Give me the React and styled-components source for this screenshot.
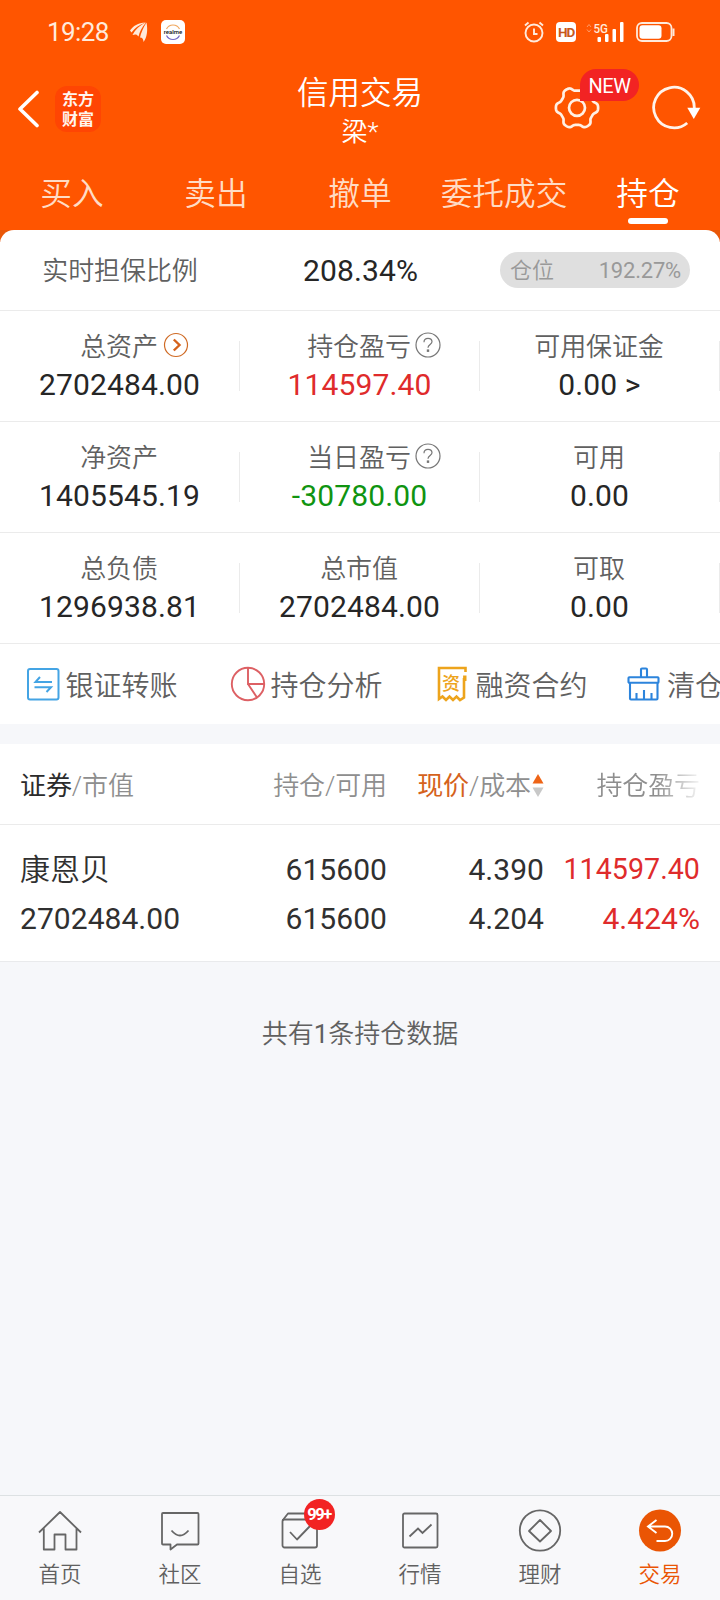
import React from "react";
import styled, { createGlobalStyle } from "styled-components";

const Global = createGlobalStyle`
  * { box-sizing: border-box; }
  body {
    margin: 0;
    background: #f6f7fa;
    font-family: Roboto, "Noto Sans CJK SC", sans-serif;
    color: #2b2b2b;
  }
  svg { display: block; flex: none; }
`;

const Screen = styled.div`
  width: 720px;
  height: 1600px;
  display: flex;
  flex-direction: column;
  overflow: hidden;
  background: #f6f7fa;
`;

const cjkLight = `
  font-family: Roboto, "Noto Sans CJK SC DemiLight", "Noto Sans CJK SC", sans-serif;
  font-weight: 350;
`;

/* ---------- header ---------- */
const Header = styled.header`
  height: 230px;
  background: #ff5500;
  color: #fff;
`;

const StatusBar = styled.div`
  height: 64px;
  display: flex;
  align-items: center;
  padding: 0 45px 0 47px;
`;

const Clock = styled.span`
  width: 83px;
  font-size: 26px;
  line-height: 30px;
  letter-spacing: -0.6px;
  color: #ffeadb;
`;

const StatusLeft = styled.div`
  display: flex;
  align-items: center;
  gap: 13px;
  flex: 1;
`;

const StatusRight = styled.div`
  display: flex;
  align-items: center;
`;

const Gap = styled.span`
  width: ${(p) => p.$w}px;
`;

const HdTag = styled.span`
  width: 20px;
  height: 20px;
  border-radius: 4px;
  background: #fff;
  color: #c8581c;
  font: 700 13.5px/21px Roboto, sans-serif;
  letter-spacing: -1.2px;
  text-align: center;
`;

const NavBar = styled.div`
  height: 96px;
  display: grid;
  grid-template-columns: 200px 1fr 200px;
`;

const NavSide = styled.div`
  display: flex;
  align-items: flex-start;
  padding: ${(p) => p.$pad};
`;

const AppLogo = styled.div`
  width: 46px;
  height: 46px;
  margin-left: 16px;
  border-radius: 12px;
  background: #ff4503;
  padding-top: 3px;
  display: flex;
  flex-direction: column;
  font: 700 16px/18px "Noto Sans CJK SC", sans-serif;
  gap: 1.5px;
  text-align: center;
  color: #fff5ee;
`;

const TitleBlock = styled.div`
  text-align: center;
  padding-top: 10px;
  ${cjkLight}
`;

const Title = styled.div`
  font-size: 31.5px;
  line-height: 40px;
`;

const Subtitle = styled.div`
  font-size: 26px;
  line-height: 36px;
`;

const GearButton = styled.div`
  position: relative;
  width: 46px;
  height: 46px;
`;

const NewBadge = styled.span`
  position: absolute;
  left: 26px;
  top: -16px;
  width: 59px;
  height: 32px;
  border-radius: 16px 16px 16px 0;
  background: #f22323;
  font-size: 20px;
  line-height: 34px;
  text-align: center;
  letter-spacing: -0.5px;
`;

const Tabs = styled.nav`
  height: 70px;
  display: grid;
  grid-template-columns: repeat(5, 144px);
`;

const Tab = styled.div`
  display: flex;
  flex-direction: column;
  align-items: center;
  padding-top: 11px;
  font-size: 31.7px;
  line-height: 47px;
  ${cjkLight}
  color: ${(p) => (p.$active ? "#fff" : "#ffdcc5")};
  &::after {
    content: "";
    width: 40px;
    height: 6px;
    border-radius: 3px;
    background: ${(p) => (p.$active ? "#fff" : "transparent")};
  }
`;

/* ---------- summary ---------- */
const SummaryBack = styled.div`
  background: linear-gradient(#e95708 0 12px, #fff 12px);
`;

const Summary = styled.section`
  background: #fff;
  border-radius: 14px 14px 0 0;
`;

const RatioRow = styled.div`
  height: 81px;
  display: grid;
  grid-template-columns: 240px 240px 240px;
  align-items: center;
  justify-items: center;
  border-bottom: 1px solid #ebebeb;
  padding-top: 2px;
`;

const Label = styled.div`
  position: relative;
  font-size: 26px;
  line-height: 36px;
  color: #606060;
  letter-spacing: -0.1px;
  ${cjkLight}
  white-space: nowrap;
`;

const Value = styled.div`
  font-size: 30px;
  line-height: 36px;
  letter-spacing: 0.12px;
  padding-left: 1px;
  color: ${(p) => p.$color || "#262626"};
  white-space: pre;
`;

const Pill = styled.div`
  width: 190px;
  height: 36px;
  margin: -2px 10px 0 0;
  border-radius: 18px;
  background: #dfdfdf;
  display: flex;
  justify-content: space-between;
  align-items: center;
  padding: 1px 9px 0 10px;
  font-size: 22px;
  line-height: 36px;
  color: #999;
  ${cjkLight}
`;

const PillNumber = styled.span`
  font-weight: 400;
  letter-spacing: -0.2px;
`;

const StatRow = styled.div`
  height: 111px;
  display: grid;
  grid-template-columns: repeat(3, 240px);
  align-items: center;
  border-bottom: 1px solid #ebebeb;
`;

const Stat = styled.div`
  height: 110px;
  padding: 18px 2px 0 0;
  display: flex;
  flex-direction: column;
  align-items: center;
  gap: 2px;
  background: linear-gradient(#ebebeb, #ebebeb) right 30px / 1px 50px no-repeat;
`;

const LabelIcon = styled.span`
  position: absolute;
  left: 100%;
  top: 3px;
  margin-left: ${(p) => p.$gap}px;
`;

const Shortcuts = styled.div`
  height: 80px;
  display: flex;
  padding-left: 24.5px;
  overflow: hidden;
`;

const Shortcut = styled.div`
  flex: none;
  width: ${(p) => p.$w}px;
  display: flex;
  align-items: center;
  gap: 3px;
  font-size: 28px;
  line-height: 40px;
  color: #606060;
  ${cjkLight}
`;

const ShortcutName = styled.span`
  padding-top: 5px;
  white-space: nowrap;
`;

const Ticket = styled.div`
  position: relative;
  width: 38px;
  height: 38px;
`;

const TicketMark = styled.span`
  position: absolute;
  left: 7.5px;
  top: 5px;
  font: 500 18px/24px "Noto Sans CJK SC", sans-serif;
  color: #eda41c;
`;

/* ---------- holdings ---------- */
const Holdings = styled.section`
  margin-top: 20px;
  background: #fff;
`;

const columns = "170px 197px 157px 156px";

const HoldHead = styled.div`
  height: 81px;
  display: grid;
  grid-template-columns: ${columns};
  padding: 24px 0 0 20px;
  border-bottom: 1px solid #ebebeb;
  font-size: 26px;
  line-height: 36px;
  letter-spacing: -0.1px;
  color: #8e8e8e;
  ${cjkLight}
`;

const HeadCell = styled.div`
  display: flex;
  justify-content: ${(p) => (p.$left ? "flex-start" : "flex-end")};
  white-space: nowrap;
  ${(p) => p.$fade && "mask-image: linear-gradient(90deg, #000 0 112px, transparent 160px);"}
`;

const Strong = styled.span`
  font-weight: 400;
  font-family: Roboto, "Noto Sans CJK SC", sans-serif;
  color: ${(p) => p.$color || "#2b2b2b"};
`;

const HoldRow = styled.div`
  height: 137px;
  display: grid;
  grid-template-columns: ${columns};
  padding: 20px 0 0 20px;
  border-bottom: 1px solid #e9eaec;
`;

const HoldCell = styled.div`
  text-align: ${(p) => (p.$left ? "left" : "right")};
  font-size: 30px;
  line-height: 49px;
  letter-spacing: 0.05px;
  white-space: nowrap;
  color: ${(p) => (p.$red ? "#df2b2b" : "#303030")};
`;

const StockName = styled.div`
  ${cjkLight}
`;

const ProfitValue = styled.div`
  font-size: 28.6px;
`;

const Count = styled.div`
  flex: 1;
  padding-top: 54px;
  text-align: center;
  font-size: 26px;
  line-height: 36px;
  color: #606060;
  ${cjkLight}
`;

const CountNumber = styled.span`
  font-weight: 400;
`;

/* ---------- bottom bar ---------- */
const BottomBar = styled.nav`
  height: 105px;
  border-top: 1px solid #dde1e3;
  background: #f8f8fa;
  display: grid;
  grid-template-columns: repeat(6, 120px);
`;

const BottomItem = styled.div`
  display: flex;
  flex-direction: column;
  align-items: center;
  padding-top: 12px;
  font-size: 21.5px;
  line-height: 30px;
  color: ${(p) => (p.$active ? "#ea5504" : "#606060")};
  ${cjkLight}
`;

const IconSlot = styled.div`
  position: relative;
  height: 52px;
`;

const CountBadge = styled.span`
  position: absolute;
  left: 26px;
  top: -9px;
  width: 31px;
  height: 31px;
  border-radius: 50%;
  background: #f22323;
  color: #fff;
  font: 700 16.5px/31px "Roboto", sans-serif;
  letter-spacing: -1.4px;
  text-indent: -1px;
  text-align: center;
`;

/* ---------- icons ---------- */
const gearPath = (() => {
  const pts = [];
  for (let i = 0; i < 180; i++) {
    const t = (i * Math.PI) / 90;
    const r = 19.1 + 2 * Math.tanh(1.7 * Math.cos(6 * t)) / Math.tanh(1.7);
    pts.push(`${(23 + r * Math.cos(t)).toFixed(2)} ${(22.8 + r * Math.sin(t)).toFixed(2)}`);
  }
  return `M${pts.join("L")}Z`;
})();

const Gear = () => (
  <svg width="46" height="46" fill="none" stroke="#fff0e4" strokeWidth="2.7" strokeLinejoin="round">
    <path d={gearPath} />
    <circle cx="23" cy="22.800" r="8" />
  </svg>
);

const Refresh = () => (
  <svg width="54" height="46">
    <path d="M37.200 38A20.300 20.300 0 1 1 44.300 23" fill="none" stroke="#fff3ea" strokeWidth="2.800" />
    <path d="M37.300 22.800h13L43.800 34z" fill="#fff" />
  </svg>
);

const Plane = () => (
  <svg width="18" height="20" fill="#ffeadb">
    <path d="M0 8.500C3 4 8 1 15.500 0.500C9 3 4.500 6 1.500 10.500z" />
    <path d="M2.500 13C5 8 10 3 16 0.500C12 5 9.500 10 8.500 14.500C7 12 5 12 2.500 13z" />
    <path d="M10 15.500C11 11 13 6 16.500 0.500C18 8 17 16 13.500 20C13.500 17.500 12.500 15.500 10 15.500z" />
  </svg>
);

const BrandTile = styled.span`
  width: 24px;
  height: 24px;
  border-radius: 5px;
  background: #fff;
`;

const Brand = () => (
  <BrandTile>
    <svg width="24" height="24" fill="none">
      <path d="M5.500 9A7.300 7.300 0 0 1 18.500 9" stroke="#f0a860" strokeWidth="1.200" />
      <path d="M5.500 15.500A7.300 7.300 0 0 0 18.500 15.500" stroke="#7467c4" strokeWidth="1.200" />
      <text x="12" y="14" fontSize="6" fontWeight="500" fontFamily="Roboto" fill="#111" textAnchor="middle">realme</text>
    </svg>
  </BrandTile>
);

const Alarm = () => (
  <svg width="20" height="22" fill="none" stroke="#ffeadb" strokeWidth="1.900">
    <circle cx="10" cy="12" r="8.500" />
    <path d="M10 7.500V13H13.500M1 4.500L4.500 1.500M19 4.500L15.500 1.500" />
  </svg>
);

const Signal = () => (
  <svg width="38" height="20">
    <path d="M1 5L3 2.500L5 5M1 7.500L3 10L5 7.500" fill="none" stroke="#ff9a66" strokeWidth="1" />
    <text x="7.500" y="11" fontSize="13" fontWeight="500" fontFamily="Roboto" fill="#ffeadb" textLength="14.500" lengthAdjust="spacingAndGlyphs">5G</text>
    <g fill="#fff">
      <rect x="11.500" y="15" width="3.500" height="5" rx="1" />
      <rect x="19" y="12" width="3.500" height="8" rx="1" />
      <rect x="26.500" y="7" width="3.500" height="13" rx="1" />
      <rect x="34" y="0" width="3.500" height="20" rx="1" />
    </g>
  </svg>
);

const Battery = () => (
  <svg width="39" height="20" fill="none">
    <rect x="1" y="1" width="34.500" height="18" rx="5" stroke="#ffeadb" strokeWidth="1.800" />
    <rect x="3.500" y="3.200" width="22" height="13.600" rx="3" fill="#fff" />
    <path d="M37.500 6.500v7.500" stroke="#ffeadb" strokeWidth="2" />
  </svg>
);

const MoreCircle = () => (
  <svg width="26" height="26" fill="none" stroke="#cf6a24">
    <circle cx="13" cy="13" r="11.500" strokeWidth="1.200" />
    <path d="M10.800 7.500L16.500 13L10.800 18.500" strokeWidth="2.400" stroke="#d5621c" />
  </svg>
);

const HelpCircle = () => (
  <svg width="26" height="26" fill="none" stroke="#777" strokeWidth="1.200">
    <circle cx="13" cy="13" r="12" />
    <path d="M9 10.200C9 7.800 10.600 6.300 13 6.300C15.400 6.300 17 7.800 17 9.800C17 12.400 13 12.800 13 15.800" />
    <rect x="12.400" y="18" width="1.200" height="1.300" fill="#777" />
  </svg>
);

const Transfer = () => (
  <svg width="38" height="38" fill="none" stroke="#44a4e4" strokeWidth="2">
    <rect x="3" y="4" width="30.500" height="30.500" rx="2" />
    <path d="M27 17H10.500L15 12M9.500 22.300H26L21.500 27" />
  </svg>
);

const Pie = () => (
  <svg width="38" height="38" fill="none" stroke="#dd6064" strokeWidth="1.900">
    <circle cx="18" cy="19" r="16.200" />
    <path d="M18 2.800V19H34M18 19L27 32.500" />
  </svg>
);

const Contract = () => (
  <Ticket>
    <svg width="38" height="38" fill="none" stroke="#eda41c" strokeWidth="2.600">
      <path d="M30.500 7V3H4V34L7.500 31.500L11 35L14.500 31.500L18 35L21.500 31.500L25 35L29 32.500V13" />
      <path d="M29.800 10.500V16" strokeWidth="3.400" />
    </svg>
    <TicketMark>资</TicketMark>
  </Ticket>
);

const Broom = () => (
  <svg width="38" height="38" fill="none" stroke="#2c84dc" strokeWidth="2.100">
    <path d="M15 12V4.500Q15 3.500 16 3.500H20Q21 3.500 21 4.500V12" />
    <rect x="2.500" y="12.300" width="30" height="5.500" rx="0.800" />
    <path d="M4 18V33.500Q4 34.500 5 34.500H30.500Q31.500 34.500 31.500 33.500V18M10.500 28V34M18 25V34M25.500 28V34" />
  </svg>
);

const SortArrows = () => (
  <svg width="13" height="36">
    <path d="M1.500 15.500L7 6L12.500 15.500z" fill="#ee6416" />
    <path d="M1.500 19.500L7 29L12.500 19.500z" fill="#c8c8c8" />
  </svg>
);

const bar = { width: 44, height: 46, fill: "none", stroke: "#666", strokeWidth: 1.8 };

const HomeIcon = () => (
  <svg {...bar} strokeLinejoin="round">
    <path d="M1 24.500L22 4L43 24.500M5.800 20.500V41.500H16.500V26.500H27.500V41.500H38.500V20.500" />
  </svg>
);
const ChatIcon = () => (
  <svg {...bar} strokeLinejoin="round">
    <path d="M5 5H39.500Q40.500 5 40.500 6V35.500Q40.500 36.500 39.500 36.500H19L12.500 41.500V36.500H5Q4 36.500 4 35.500V6Q4 5 5 5z" />
    <path d="M13.500 22.500Q22 32.500 30.500 22.500" />
  </svg>
);
const BoxIcon = () => (
  <svg {...bar} strokeLinejoin="round">
    <rect x="4.500" y="11.500" width="34.500" height="28" rx="2" />
    <path d="M4.500 12.500L10 5.500H36L39 12M12 24L19 31.500L33 17" />
  </svg>
);
const ChartIcon = () => (
  <svg {...bar}>
    <rect x="5" y="5.500" width="34.500" height="34" rx="1.500" />
    <path d="M11.500 28.500L20 20.500L24.500 25L33.500 16.500" />
  </svg>
);
const WealthIcon = () => (
  <svg {...bar} strokeLinejoin="round">
    <circle cx="22" cy="22.500" r="20.200" />
    <path d="M22 12L33 23L22 33.500L11 23z" />
  </svg>
);
const TradeIcon = () => (
  <svg {...bar} stroke="#fff" strokeWidth="1.900">
    <circle cx="22" cy="22.500" r="21" fill="#ea5504" stroke="none" />
    <path d="M18.500 12L10 18.500L18.500 25M10 18.500H27A7 7 0 0 1 27 33H18.500" />
  </svg>
);

/* ---------- data ---------- */
const tabs = ["买入", "卖出", "撤单", "委托成交", "持仓"];

const stats = [
  [
    { label: "总资产", value: "2702484.00", icon: <MoreCircle />, gap: 5 },
    { label: "持仓盈亏", value: "114597.40", color: "#df2b2b", icon: <HelpCircle />, gap: 4 },
    { label: "可用保证金", value: "0.00 >" },
  ],
  [
    { label: "净资产", value: "1405545.19" },
    { label: "当日盈亏", value: "-30780.00", color: "#109410", icon: <HelpCircle />, gap: 4 },
    { label: "可用", value: "0.00" },
  ],
  [
    { label: "总负债", value: "1296938.81" },
    { label: "总市值", value: "2702484.00" },
    { label: "可取", value: "0.00" },
  ],
];

const shortcuts = [
  { name: "银证转账", icon: <Transfer />, w: 205 },
  { name: "持仓分析", icon: <Pie />, w: 205 },
  { name: "融资合约", icon: <Contract />, w: 191.5 },
  { name: "清仓", icon: <Broom />, w: 205 },
];

const bottom = [
  { name: "首页", icon: <HomeIcon /> },
  { name: "社区", icon: <ChatIcon /> },
  { name: "自选", icon: <BoxIcon />, badge: "99+" },
  { name: "行情", icon: <ChartIcon /> },
  { name: "理财", icon: <WealthIcon /> },
  { name: "交易", icon: <TradeIcon />, active: true },
];

export default function App() {
  return (
    <Screen>
      <Global />
      <Header>
        <StatusBar>
          <Clock>19:28</Clock>
          <StatusLeft>
            <Plane />
            <Brand />
          </StatusLeft>
          <StatusRight>
            <Alarm />
            <Gap $w={12} />
            <HdTag>HD</HdTag>
            <Gap $w={10} />
            <Signal />
            <Gap $w={12} />
            <Battery />
          </StatusRight>
        </StatusBar>
        <NavBar>
          <NavSide $pad="22px 0 0 17px">
            <svg width="22" height="46" fill="none" stroke="#fff" strokeWidth="3.6" strokeLinecap="round" strokeLinejoin="round">
              <path d="M20 6.500L3 23L20 39.500" />
            </svg>
            <AppLogo>
              <span>东方</span>
              <span>财富</span>
            </AppLogo>
          </NavSide>
          <TitleBlock>
            <Title>信用交易</Title>
            <Subtitle>梁*</Subtitle>
          </TitleBlock>
          <NavSide $pad="21px 0 0 34px">
            <GearButton>
              <Gear />
              <NewBadge>NEW</NewBadge>
            </GearButton>
            <Gap $w={50} />
            <Refresh />
          </NavSide>
        </NavBar>
        <Tabs>
          {tabs.map((t, i) => (
            <Tab key={t} $active={i === 4}>{t}</Tab>
          ))}
        </Tabs>
      </Header>

      <SummaryBack>
        <Summary>
          <RatioRow>
            <Label>实时担保比例</Label>
            <Value>208.34%</Value>
            <Pill>
              <span>仓位</span>
              <PillNumber>192.27%</PillNumber>
            </Pill>
          </RatioRow>
          {stats.map((row, i) => (
            <StatRow key={i}>
              {row.map((s) => (
                <Stat key={s.label}>
                  <Label>
                    {s.label}
                    {s.icon && <LabelIcon $gap={s.gap}>{s.icon}</LabelIcon>}
                  </Label>
                  <Value $color={s.color}>{s.value}</Value>
                </Stat>
              ))}
            </StatRow>
          ))}
          <Shortcuts>
            {shortcuts.map((s) => (
              <Shortcut key={s.name} $w={s.w}>
                {s.icon}
                <ShortcutName>{s.name}</ShortcutName>
              </Shortcut>
            ))}
          </Shortcuts>
        </Summary>
      </SummaryBack>

      <Holdings>
        <HoldHead>
          <HeadCell $left><Strong>证券</Strong>/市值</HeadCell>
          <HeadCell>持仓/可用</HeadCell>
          <HeadCell><Strong $color="#d5621c">现价</Strong>/成本<SortArrows /></HeadCell>
          <HeadCell $fade>持仓盈亏</HeadCell>
        </HoldHead>
        <HoldRow>
          <HoldCell $left><StockName>康恩贝</StockName>2702484.00</HoldCell>
          <HoldCell>615600<br />615600</HoldCell>
          <HoldCell>4.390<br />4.204</HoldCell>
          <HoldCell $red><ProfitValue>114597.40</ProfitValue>4.424%</HoldCell>
        </HoldRow>
      </Holdings>

      <Count>共有<CountNumber>1</CountNumber>条持仓数据</Count>

      <BottomBar>
        {bottom.map((b) => (
          <BottomItem key={b.name} $active={b.active}>
            <IconSlot>
              {b.icon}
              {b.badge && <CountBadge>{b.badge}</CountBadge>}
            </IconSlot>
            {b.name}
          </BottomItem>
        ))}
      </BottomBar>
    </Screen>
  );
}
